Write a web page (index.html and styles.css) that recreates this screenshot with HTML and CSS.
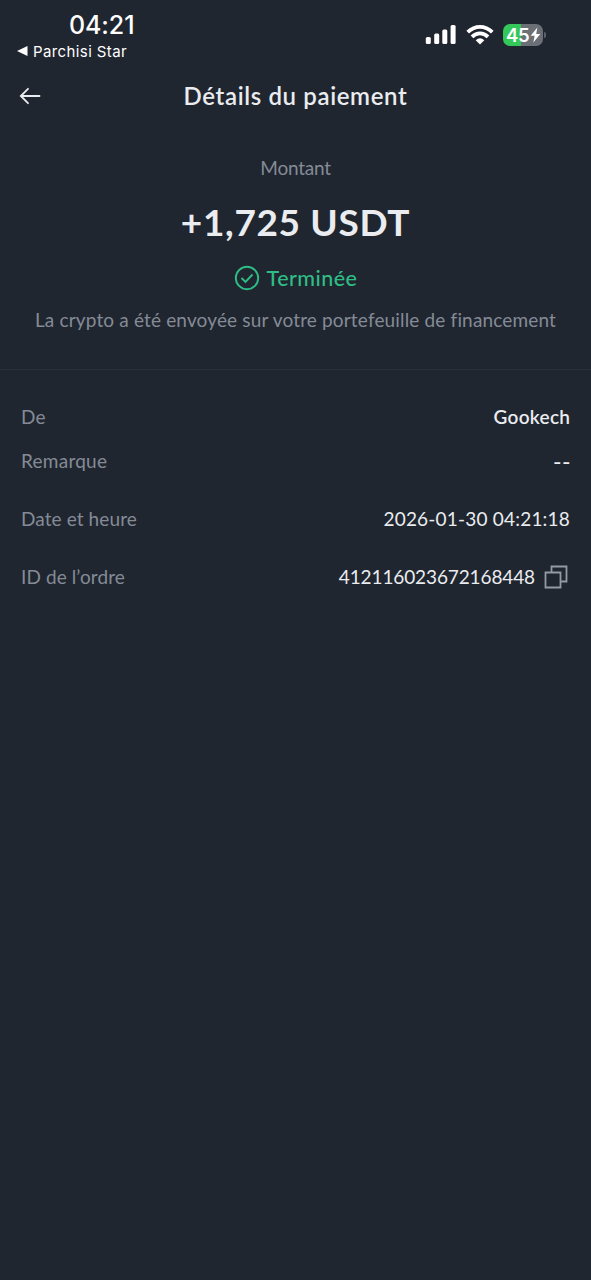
FILE: index.html
```html
<!DOCTYPE html>
<html lang="fr">
<head>
<meta charset="utf-8">
<title>Détails du paiement</title>
<link rel="stylesheet" href="styles.css">
</head>
<body>
<div class="statusbar">
  <div class="clock-col">
    <span class="clock">04:21</span>
    <span class="back-app"><svg width="11" height="10" viewBox="0 0 11 10"><path d="M0 5 10.500 0v10z" fill="currentColor"/></svg><span class="app-name">Parchisi Star</span></span>
  </div>
  <div class="indicators">
    <svg class="signal" width="32" height="20" viewBox="0 0 32 20" fill="#fff"><rect x=".8" y="12" width="5" height="7" rx="1.5"/><rect x="9.2" y="8.5" width="5" height="10.500" rx="1.500"/><rect x="17.300" y="4.500" width="5" height="14.500" rx="1.500"/><rect x="25.600" y="0" width="5" height="19" rx="1.500"/></svg>
    <svg class="wifi" width="28" height="20" viewBox="0 0 28 20"><g fill="none" stroke="#fff" stroke-width="3.800"><path d="M1.700 7.200Q7.300 1.900 14 1.900T26.300 7.200"/><path d="M6 11.800Q9.600 8.300 14 8.300T22 11.800"/></g><path d="M9.700 15.200Q14 11.500 18.300 15.200L14 19.500z" fill="#fff"/></svg>
    <div class="battery"><span class="level">45</span><svg width="11" height="16" viewBox="0 0 10 15"><path d="M6.700.5.500 8.300h3.700L3 14.500l6.500-8H5.700z" fill="#fff"/></svg></div>
    <span class="battery-cap"></span>
  </div>
</div>
<header class="navbar">
  <svg class="back" width="22" height="18" viewBox="0 0 22 18" fill="none" stroke="#eaecef" stroke-width="1.800" stroke-linecap="round"><path d="M9 1.800 1.800 9 9 16.200M1.800 9H20.500"/></svg>
  <h1 class="title">Détails du paiement</h1>
</header>
<section class="summary">
  <div class="caption">Montant</div>
  <div class="amount">+1,725 USDT</div>
  <div class="status"><svg width="26" height="26" viewBox="0 0 26 26" fill="none" stroke="currentColor" stroke-width="1.900"><circle cx="13" cy="13" r="11.200"/><path d="m7.500 13 4 4 7-7.500"/></svg><span class="status-text">Terminée</span></div>
  <div class="note">La crypto a été envoyée sur votre portefeuille de financement</div>
</section>
<main class="details">
  <div class="row"><span class="label">De</span><span class="value name">Gookech</span></div>
  <div class="row"><span class="label remark">Remarque</span><span class="value dashes">--</span></div>
  <div class="row"><span class="label">Date et heure</span><span class="value time">2026-01-30 04:21:18</span></div>
  <div class="row"><span class="label">ID de l’ordre</span><span class="value id">412116023672168448</span><svg class="copy" width="24" height="24" viewBox="0 0 24 24" fill="none" stroke="#929aa5" stroke-width="1.800"><path d="M1.500 7.500h15v15h-15zM7.500 7V1.500h15v15H17"/></svg></div>
</main>
</body>
</html>
```
FILE: styles.css
```css
* { box-sizing: border-box; }
body { margin: 0; width: 591px; height: 1280px; background: #202630; color: #eaecef; font-family: Lato, sans-serif; overflow: hidden; }
svg { display: block; flex: none; }
.statusbar { height: 70px; display: flex; justify-content: space-between; padding: 10px 45px 0 17px; color: #fff; font-family: Inter, sans-serif; }
.clock-col { display: flex; flex-direction: column; }
.clock { font-size: 25px; line-height: 30px; font-weight: 500; margin-left: 52px; letter-spacing: -.1px; }
.back-app { display: flex; align-items: center; gap: 5px; height: 22px; font-size: 15px; }
.app-name { letter-spacing: .4px; white-space: nowrap; }
.indicators { display: flex; align-items: flex-start; padding-top: 15px; }
.wifi { margin-left: 9px; }
.battery { display: flex; align-items: center; width: 40px; height: 22px; margin: -1px 0 0 9px; padding-left: 3px; border-radius: 7px; background: linear-gradient(90deg, #34c759 45%, #6b6f76 45%); }
.level { font-size: 18.5px; line-height: 22px; font-weight: 600; letter-spacing: -.2px; }
.battery-cap { width: 2px; height: 6px; margin: 7px 0 0 1px; border-radius: 0 2px 2px 0; background: #5c6169; }
.navbar { height: 52px; display: grid; grid-template-columns: 60px 1fr 60px; align-items: center; }
.back { margin-left: 19px; }
.title { margin: 0; text-align: center; font-size: 24px; line-height: 28px; font-weight: 600; letter-spacing: .63px; white-space: nowrap; }
.summary { height: 248px; padding-top: 34px; display: flex; flex-direction: column; align-items: center; border-bottom: 1px solid #29303a; white-space: nowrap; }
.caption { color: #848b96; font-size: 19px; line-height: 24px; letter-spacing: -.25px; }
.amount { margin-top: 20px; font-size: 37px; line-height: 44px; font-weight: 700; letter-spacing: .65px; }
.status { margin-top: 21px; height: 26px; display: flex; align-items: center; gap: 7px; color: #2ebd85; font-size: 21.5px; font-weight: 500; letter-spacing: .45px; }
.status-text { line-height: 24px; padding-bottom: 1px; }
.note { margin-top: 17px; color: #848b96; font-size: 19px; line-height: 24px; letter-spacing: .16px; }
.details { display: flex; flex-direction: column; padding: 35px 21px 0; }
.row { height: 24px; display: flex; align-items: center; font-size: 19px; line-height: 24px; margin-bottom: 34px; }
.row:first-child { margin-bottom: 20px; }
.label { color: #848b96; margin-right: auto; letter-spacing: .1px; }
.remark { letter-spacing: .25px; }
.name { font-weight: 600; letter-spacing: .3px; margin-right: -.3px; }
.time { letter-spacing: .2px; }
.id { letter-spacing: -.12px; }
.dashes { font-size: 23px; letter-spacing: .4px; margin-right: -1px; }
.copy { margin: 0 2px 0 9px; }
```
